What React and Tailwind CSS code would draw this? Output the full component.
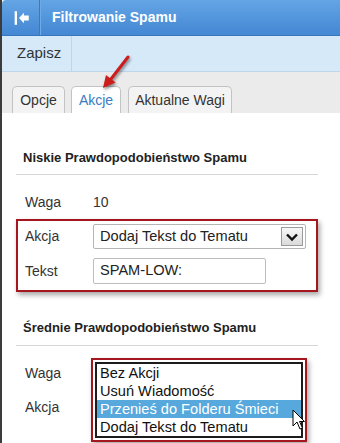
import React from 'react';

const Row = ({ label, children, className = '' }) => (
  <div className={`flex items-center ${className}`}>
    <div className="w-[68px] text-[14px] text-[#333]">{label}</div>
    {children}
  </div>
);

const App = () => {
  const options = ['Bez Akcji', 'Usuń Wiadomość', 'Przenieś do Folderu Śmieci', 'Dodaj Tekst do Tematu'];

  return (
    <div className="relative w-[340px] h-[443px] overflow-hidden bg-white font-['Liberation_Sans',Arial,sans-serif]">
      <div className="h-full border-l-2 border-[#3c3c3c] flex flex-col">
        {/* Header */}
        <div className="h-[36px] flex bg-gradient-to-b from-[#64a5e5] to-[#4487d3] border-b border-[#3775bd] rounded-tl-[4px]">
          <div className="w-[38px] border-r border-[#3a78c2] flex items-center justify-center">
            <svg width="38" height="36" viewBox="0 0 38 36">
              <rect x="13" y="11" width="2.4" height="14" fill="#fff" />
              <polygon points="17.5,18 22.5,12.5 22.5,15.5 27.5,15.5 27.5,20.5 22.5,20.5 22.5,23.5" fill="#fff" />
            </svg>
          </div>
          <div className="border-l border-[#6eaae6] flex items-center pl-[11px] text-white font-bold text-[14px]">
            Filtrowanie Spamu
          </div>
        </div>

        {/* Toolbar */}
        <div className="h-[36px] flex bg-[#d6e9f9] border-b border-[#bed6ec]">
          <div className="w-[70px] border-r border-[#bed6ec] flex items-center pl-[15px] text-[15px] text-[#333]">
            Zapisz
          </div>
        </div>

        {/* Tabs */}
        <div className="h-[41px] bg-[#ebebeb] flex items-end pl-[10px]">
          <div className="w-[53px] h-[27px] border border-b-0 border-[#c3c3c3] rounded-t-[5px] bg-[#f3f3f3] flex items-center justify-center text-[14px] text-[#333]">
            Opcje
          </div>
          <div className="ml-[6px] w-[50px] h-[27px] border border-b-0 border-[#c3c3c3] rounded-t-[5px] bg-white flex items-center justify-center text-[14px] text-[#3b7cc2]">
            Akcje
          </div>
          <div className="ml-[7px] w-[104px] h-[27px] border border-b-0 border-[#c3c3c3] rounded-t-[5px] bg-[#f3f3f3] flex items-center justify-center text-[14px] text-[#333]">
            Aktualne Wagi
          </div>
        </div>

        {/* Content */}
        <div className="ml-[14px] w-[302px]">
          <div className="pt-[37px] pb-[8px] pl-[7px] border-b border-[#d6d6d6] text-[13px] leading-[16px] font-bold text-[#222]">
            Niskie Prawdopodobieństwo Spamu
          </div>
          <Row label="Waga" className="mt-[15px] h-[24px] pl-[9px]">
            <span className="text-[14px] text-[#333]">10</span>
          </Row>

          <div className="mt-[5px] w-[302px] border-2 border-[#a5161e] shadow-[2px_3px_5px_rgba(0,0,0,0.35)] pl-[7px] pt-[3px] pb-[6px]">
            <Row label="Akcja" className="h-[25px]">
              <div className="w-[213px] h-[25px] border border-[#b5b5b5] rounded-[2px] flex items-center justify-between pl-[6px] pr-[2px] text-[14.6px] text-[#222]">
                <span>Dodaj Tekst do Tematu</span>
                <div className="w-[22px] h-[19px] border border-[#9a9a9a] bg-gradient-to-b from-[#f8f8f8] to-[#dadada] flex items-center justify-center">
                  <svg width="14" height="10" viewBox="0 0 14 10">
                    <polyline points="2,2.5 7,7.5 12,2.5" fill="none" stroke="#111" strokeWidth="2.4" />
                  </svg>
                </div>
              </div>
            </Row>
            <Row label="Tekst" className="mt-[9px] h-[26px]">
              <div className="w-[173px] h-[26px] border border-[#bdbdbd] rounded-[2px] flex items-center pl-[6px] text-[14.6px] text-[#222]">
                SPAM-LOW:
              </div>
            </Row>
          </div>

          <div className="mt-[28px] pb-[9px] pl-[7px] border-b border-[#d6d6d6] text-[13px] leading-[16px] font-bold text-[#222]">
            Średnie Prawdopodobieństwo Spamu
          </div>
          <Row label="Waga" className="mt-[15px] h-[24px] pl-[9px]">
            <span className="text-[14px] text-[#333] -ml-[2px]">20</span>
          </Row>
          <Row label="Akcja" className="mt-[10px] h-[24px] pl-[9px]" />
        </div>
      </div>

      {/* Open dropdown list */}
      <div className="absolute left-[91px] top-[358px] w-[216px] h-[84px] border-2 border-[#a5161e] bg-white p-[2px] shadow-[2px_3px_5px_rgba(0,0,0,0.35)]">
        <div className="w-[208px] h-[76px] border-2 border-[#1c1c1c]">
          {options.map((o, i) => (
            <div
              key={o}
              className={`h-[18px] leading-[18px] pl-[3px] text-[14.6px] whitespace-nowrap ${i === 2 ? 'bg-[#56a8dd] text-white' : 'text-[#111]'}`}
            >
              {o}
            </div>
          ))}
        </div>
      </div>

      {/* Mouse cursor */}
      <svg className="absolute left-[292px] top-[409px]" width="14" height="23" viewBox="0 0 14 23">
        <polygon points="1,1 1,17 5,13 8,20 10.5,19 7.5,12.5 12.5,12.5" fill="#fff" stroke="#000" strokeWidth="1" strokeLinejoin="round" />
      </svg>

      {/* Red annotation arrow */}
      <svg className="absolute left-[95px] top-[50px] drop-shadow-[1px_2px_1.5px_rgba(0,0,0,0.45)]" width="40" height="45" viewBox="95 50 40 45">
        <line x1="128" y1="57" x2="111" y2="79" stroke="#cc1c1c" strokeWidth="3" strokeLinecap="round" />
        <polygon points="103,88 115.5,82.5 106,75" fill="#cc1c1c" />
      </svg>
    </div>
  );
};

export default App;
